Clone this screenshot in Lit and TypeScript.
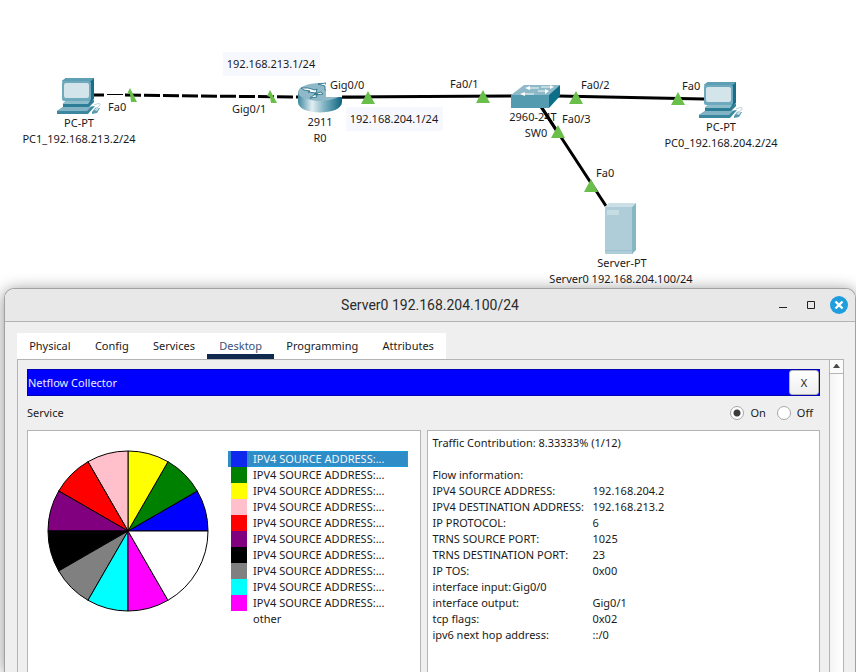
import { LitElement, html, svg, css } from "lit";
import { customElement, state } from "lit/decorators.js";
import { classMap } from "lit/directives/class-map.js";

type Anchor = "start" | "middle";
interface Label { text: string; x: number; y: number; anchor: Anchor; }

const at = (text: string, x: number, y: number, anchor: Anchor = "middle"): Label => ({ text, x, y, anchor });

const LABELS: Label[] = [
  at("PC-PT", 79, 127),
  at("PC1_192.168.213.2/24", 79, 143),
  at("Fa0", 108, 111, "start"),
  at("Gig0/1", 232, 113, "start"),
  at("2911", 320, 126),
  at("R0", 320, 142),
  at("Gig0/0", 330, 89, "start"),
  at("Fa0/1", 450, 88, "start"),
  at("Fa0/2", 581, 89, "start"),
  at("Fa0/3", 562, 123, "start"),
  at("SW0", 536, 137),
  at("Fa0", 682, 90, "start"),
  at("PC-PT", 721, 131),
  at("PC0_192.168.204.2/24", 721, 147),
  at("Fa0", 596, 177, "start"),
  at("Server-PT", 622, 267),
  at("Server0 192.168.204.100/24", 621, 283),
];

const PORTS = [[368, 91], [483, 90], [576, 91], [678, 92], [558, 125], [591, 179]];

const SLICES = ["blue", "green", "yellow", "pink", "red", "purple", "black", "gray", "cyan", "magenta"];

const FLOW: [string, string][] = [
  ["IPV4 SOURCE ADDRESS:", "192.168.204.2"],
  ["IPV4 DESTINATION ADDRESS:", "192.168.213.2"],
  ["IP PROTOCOL:", "6"],
  ["TRNS SOURCE PORT:", "1025"],
  ["TRNS DESTINATION PORT:", "23"],
  ["IP TOS:", "0x00"],
  ["interface input:", "Gig0/0"],
  ["interface output:", "Gig0/1"],
  ["tcp flags:", "0x02"],
  ["ipv6 next hop address:", "::/0"],
];

@customElement("network-canvas")
class NetworkCanvas extends LitElement {
  static styles = css`
    :host { display: block; height: 288px; background: #fff; }
    .scene { display: block; width: 100%; height: 100%; font: 11px "Noto Sans", sans-serif; fill: #1a1a1a; }
    .note { fill: #f7f8fe; }
    .wire { fill: none; stroke: #000; stroke-width: 3; }
    .dashed { stroke-dasharray: 16 3; }
    .port { fill: #6abf4b; }
  `;

  pc(x: number, y: number) {
    return svg`<g transform="translate(${x} ${y})">
      <path fill="#17708a" d="M5 3L9 0H37V21L34 24Z"/>
      <path fill="#5f9fb4" d="M5 3L9 0H37L34 3Z"/>
      <rect x="5" y="3" width="29" height="20" rx="2" fill="#6ea9bd"/>
      <rect x="7" y="5" width="25" height="15" rx="2" fill="#d3e4ea"/>
      <path fill="#2d7d96" d="M6 26L9 23H33L37 22V24L32 29H6Z"/>
      <path fill="#8dbccb" d="M6 25L9 23H33L31 26H6Z"/>
      <path fill="#3b87a0" d="M0 33L6 29H31L38 28L31 36H0Z"/>
      <path fill="#82b4c5" d="M0 33L6 29H34L30 33Z"/>
      <path fill="none" stroke="#b9d4de" d="M37 27Q44 24 43 27Q42 30 38 30"/>
      <path fill="#5899af" d="M35 34L38 30H43L40 35L35 36Z"/>
      <path fill="#c7dde5" d="M37 32L39 30H42L40 33Z"/>
    </g>`;
  }

  render() {
    return html`<svg class="scene" role="img" aria-label="Network topology">
      <defs>
        <linearGradient id="drum"><stop offset="0" stop-color="#3b87a0"/><stop offset=".32" stop-color="#e2eef2"/><stop offset=".6" stop-color="#7fb2c3"/><stop offset="1" stop-color="#0d6480"/></linearGradient>
      </defs>
      <rect class="note" x="223" y="52" width="97" height="24"/>
      <rect class="note" x="346" y="107" width="97" height="24"/>
      <path class="wire" d="M94 95H104"/>
      <path fill="#000" d="M107 94H123V95H107Z"/>
      <path class="wire dashed" d="M125 95L200 96L300 97"/>
      <path class="wire" d="M340 97L512 96M558 96L704 99M540 105L606 206"/>
      <path class="port" d="M127 94L130 88L137 102H131L130 94ZM267 96L270 90L277 103H271L270 97Z"/>

      ${this.pc(57, 78)}
      ${this.pc(699, 82)}

      <path fill="url(#drum)" d="M298 92V102C298 116 342 116 342 102V92Z"/>
      <ellipse cx="320" cy="92" rx="22" ry="9" fill="#8fb8c8"/>
      <g fill="#fff" stroke="#1b6780" stroke-width=".8">
        <path d="M301 88L308 88L315 90L317 89L316 93L308 92L310 91L304 90Z"/>
        <path d="M325 86L318 84L326 83V85L334 82L329 87L331 89L325 90Z"/>
        <path d="M318 94L314 95L310 98L317 97L316 95L323 94L321 92L314 94Z"/>
      </g>
      <rect x="326" y="79" width="40" height="18" fill="#fff"/>
      <path class="wire" d="M342 97H366"/>

      <text x="533" y="121" text-anchor="middle">2960-24T</text>
      <path class="wire" d="M540 105L560 136"/>
      <path fill="#8db9c8" d="M511 95L524 85H560L549 96Z"/>
      <path fill="#559bb0" d="M511 95H549V108H511Z"/>
      <path fill="#0d6e88" d="M549 95L560 85V96L549 108Z"/>
      <g fill="none" stroke="#f4f9fb">
        <path d="M539 88H527M538 91H548M534 94H522M541 87H552"/>
      </g>
      <path fill="#fff" d="M530 86V90L525 88ZM525 92V96L520 94ZM550 85L554 87L550 89ZM545 89L549 91L545 94Z"/>

      <path fill="#aecdd8" d="M605 207H633V254H605Z"/>
      <path fill="#cadfe6" d="M605 207L609 203H636L632 207Z"/>
      <path fill="#87b6c5" d="M632 207L636 203V250L632 254Z"/>
      <rect x="607" y="210" width="12" height="5" fill="#c6dde4"/>
      <path stroke="#9cc1ce" d="M605 250.500H632"/>

      ${PORTS.map(([x, y]) => svg`<path class="port" d="M${x} ${y}L${x + 7} ${y + 13}H${x - 7}Z"/>`)}
      ${LABELS.map((l) => svg`<text x=${l.x} y=${l.y} text-anchor=${l.anchor}>${l.text}</text>`)}
      <text x="271" y="68" text-anchor="middle">192.168.213.1/24</text>
      <text x="394" y="123" text-anchor="middle">192.168.204.1/24</text>
    </svg>`;
  }
}

@customElement("traffic-pie")
class TrafficPie extends LitElement {
  static styles = css`
    :host { display: block; flex: none; width: 160px; height: 160px; }
    .pie { display: block; overflow: visible; stroke: #000; }
  `;

  slice(color: string, i: number, span = 1) {
    const p = (n: number) => {
      const a = (n * Math.PI) / 6;
      return `${(80 * Math.cos(a)).toFixed(2)} ${(-80 * Math.sin(a)).toFixed(2)}`;
    };
    return svg`<path fill=${color} d="M0 0L${p(i)}A80 80 0 0 0 ${p(i + span)}Z"/>`;
  }

  render() {
    return html`<svg class="pie" width="160" height="160" viewBox="-80 -80 160 160" role="img" aria-label="Traffic share">
      ${SLICES.map((c, i) => this.slice(c, i))}${this.slice("white", 10, 2)}
    </svg>`;
  }
}

@customElement("app-root")
class AppRoot extends LitElement {
  @state() selected = 0;
  @state() tab = "Desktop";

  static styles = css`
    :host { display: flex; flex-direction: column; height: 100vh; overflow: hidden; background: #fff; font: 11px/16px "Noto Sans", sans-serif; color: #1a1a1a; }
    button { font: inherit; color: inherit; margin: 0; padding: 0; border: 0; background: none; }
    .canvas { flex: none; }
    .window { position: relative; flex: 1; min-height: 0; display: flex; flex-direction: column; margin-left: 4px; border: 1px solid #a2a2a2; border-bottom: 0; border-radius: 10px 10px 0 0; background: #efefef; box-shadow: 0 2px 16px rgba(0, 0, 0, .45); }
    .titlebar { flex: none; display: grid; grid-template-columns: 1fr auto 1fr; align-items: center; height: 32px; padding: 0 7px; border-bottom: 1px solid #b4b4b4; border-radius: 9px 9px 0 0; background: #e8e8e8; }
    .title { grid-column: 2; margin: 0; font: 400 14px/18px Roboto, sans-serif; color: #2b2b2b; }
    .controls { display: flex; justify-content: flex-end; gap: 10px; }
    .control { width: 18px; height: 18px; }
    .glyph { display: block; }
    .body { flex: 1; min-height: 0; display: flex; flex-direction: column; padding: 11px 11px 0 12px; }
    .tabs { display: flex; width: 429px; background: #fff; }
    .tab { flex: 1 0 auto; height: 26px; padding: 0 12px; border-bottom: 5px solid transparent; border-top: 5px solid transparent; line-height: 16px; }
    .tab.active { border-bottom-color: #10294e; color: #3a5277; }
    .panel { flex: 1; min-height: 0; display: flex; border: 1px solid #b4b4b4; border-bottom: 0; }
    .content { flex: 1; min-width: 0; display: flex; flex-direction: column; padding: 9px 9px 0; }
    .heading { flex: none; display: flex; align-items: center; justify-content: space-between; height: 25px; border: 1px solid #0000b4; background: #00f; color: #ebebff; }
    .name { margin: 0; font-size: 11px; font-weight: 400; }
    .close { width: 30px; height: 25px; border: 1px solid #b4b4b4; border-radius: 3px; background: linear-gradient(#fff, #efefef); color: #1a1a1a; }
    .service { flex: none; display: flex; align-items: center; justify-content: space-between; height: 34px; margin: 0; padding-right: 7px; }
    .options { display: flex; gap: 11px; }
    .option { display: flex; align-items: center; gap: 6px; }
    .radio { appearance: none; width: 14px; height: 14px; margin: 0; border: 1px solid #a8a8a8; border-radius: 50%; background: #fff; }
    .radio:checked { background: radial-gradient(circle, #3c3c3c 3px, #fff 4px); }
    .columns { flex: 1; min-height: 0; display: grid; grid-template-columns: 1fr 1fr; gap: 6px; }
    .card { border: 1px solid #b4b4b4; border-bottom: 0; background: #fff; min-width: 0; }
    .chart { display: flex; gap: 20px; padding: 20px 12px 0 20px; }
    .legend { flex: 1; min-width: 0; margin: 0; padding: 0; list-style: none; }
    .entry { display: flex; width: 100%; height: 16px; padding-left: 3px; text-align: left; }
    .swatch { flex: none; width: 16px; height: 16px; margin-right: 2px; }
    .caption { flex: 1; padding-left: 4px; line-height: 16px; }
    .entry.picked { background: #308cc6; color: #f0f6fa; }
    .entry.picked .caption { outline: 1px solid #1d9dd9; outline-offset: -1px; border-radius: 2px; }
    .details { padding: 4px 4px 0 5px; }
    .line { margin: 0 0 16px; }
    .flow { width: 100%; table-layout: fixed; border-collapse: collapse; }
    .flow caption { text-align: left; }
    .flow th, .flow td { padding: 0; font-weight: 400; text-align: left; white-space: nowrap; }
    .key { width: 160px; }
    .inline { padding-left: 1px; }
    .scrollbar { flex: none; width: 13px; display: flex; flex-direction: column; border-left: 1px solid #b4b4b4; background: linear-gradient(90deg, #f4f4f4, #fff); }
    .up { height: 14px; border-bottom: 1px solid #b4b4b4; background: #fbfbfb; }
  `;

  render() {
    const tabs = ["Physical", "Config", "Services", "Desktop", "Programming", "Attributes"];
    return html`
      <network-canvas class="canvas"></network-canvas>
      <section class="window">
        <header class="titlebar">
          <h1 class="title">Server0 192.168.204.100/24</h1>
          <div class="controls">
            <button class="control" aria-label="Minimize"><svg class="glyph" width="18" height="18"><path fill="#222" d="M5 11H13V12H5Z"/></svg></button>
            <button class="control" aria-label="Maximize"><svg class="glyph" width="18" height="18"><path fill="none" stroke="#222" d="M5.500 5.500H12.500V12.500H5.500Z"/></svg></button>
            <button class="control" aria-label="Close"><svg class="glyph" width="18" height="18"><circle cx="9" cy="9" r="9" fill="#1f9ede"/><path stroke="#fff" stroke-width="2.400" d="M5.500 5.500L12.500 12.500M12.500 5.500L5.500 12.500"/></svg></button>
          </div>
        </header>
        <div class="body">
          <nav class="tabs" role="tablist">
            ${tabs.map((t) => html`<button role="tab" aria-selected=${t === this.tab} class=${classMap({ tab: true, active: t === this.tab })} @click=${() => (this.tab = t)}>${t}</button>`)}
          </nav>
          <div class="panel">
            <div class="content">
              <header class="heading">
                <h2 class="name">Netflow Collector</h2>
                <button class="close">X</button>
              </header>
              <div class="service" role="radiogroup" aria-labelledby="service">
                <span id="service">Service</span>
                <div class="options">
                  <label class="option"><input class="radio" type="radio" name="service" checked />On</label>
                  <label class="option"><input class="radio" type="radio" name="service" />Off</label>
                </div>
              </div>
              <div class="columns">
                <div class="card chart">
                  <traffic-pie></traffic-pie>
                  <ul class="legend">
                    ${[...SLICES, "white"].map((c, i) => html`<li>
                      <button class=${classMap({ entry: true, picked: i === this.selected })} @click=${() => (this.selected = i)}>
                        <span class="swatch" style="background:${i === 0 && this.selected === 0 ? "#0f28ee" : c}"></span>
                        <span class="caption">${c === "white" ? "other" : "IPV4 SOURCE ADDRESS:..."}</span>
                      </button>
                    </li>`)}
                  </ul>
                </div>
                <div class="card details">
                  <p class="line">Traffic Contribution: 8.33333% (1/12)</p>
                  <table class="flow">
                    <caption>Flow information:</caption>
                    <colgroup><col class="key" /><col /></colgroup>
                    <tbody>
                      ${FLOW.map(([k, v]) => k === "interface input:"
                        ? html`<tr><td colspan="2">${k}<span class="inline">${v}</span></td></tr>`
                        : html`<tr><th scope="row">${k}</th><td>${v}</td></tr>`)}
                    </tbody>
                  </table>
                </div>
              </div>
            </div>
            <div class="scrollbar">
              <button class="up" aria-label="Scroll up"><svg class="glyph" width="13" height="13"><path fill="#4a4a4a" d="M3 8L6 4H7L10 8Z"/></svg></button>
            </div>
          </div>
        </div>
      </section>`;
  }
}
